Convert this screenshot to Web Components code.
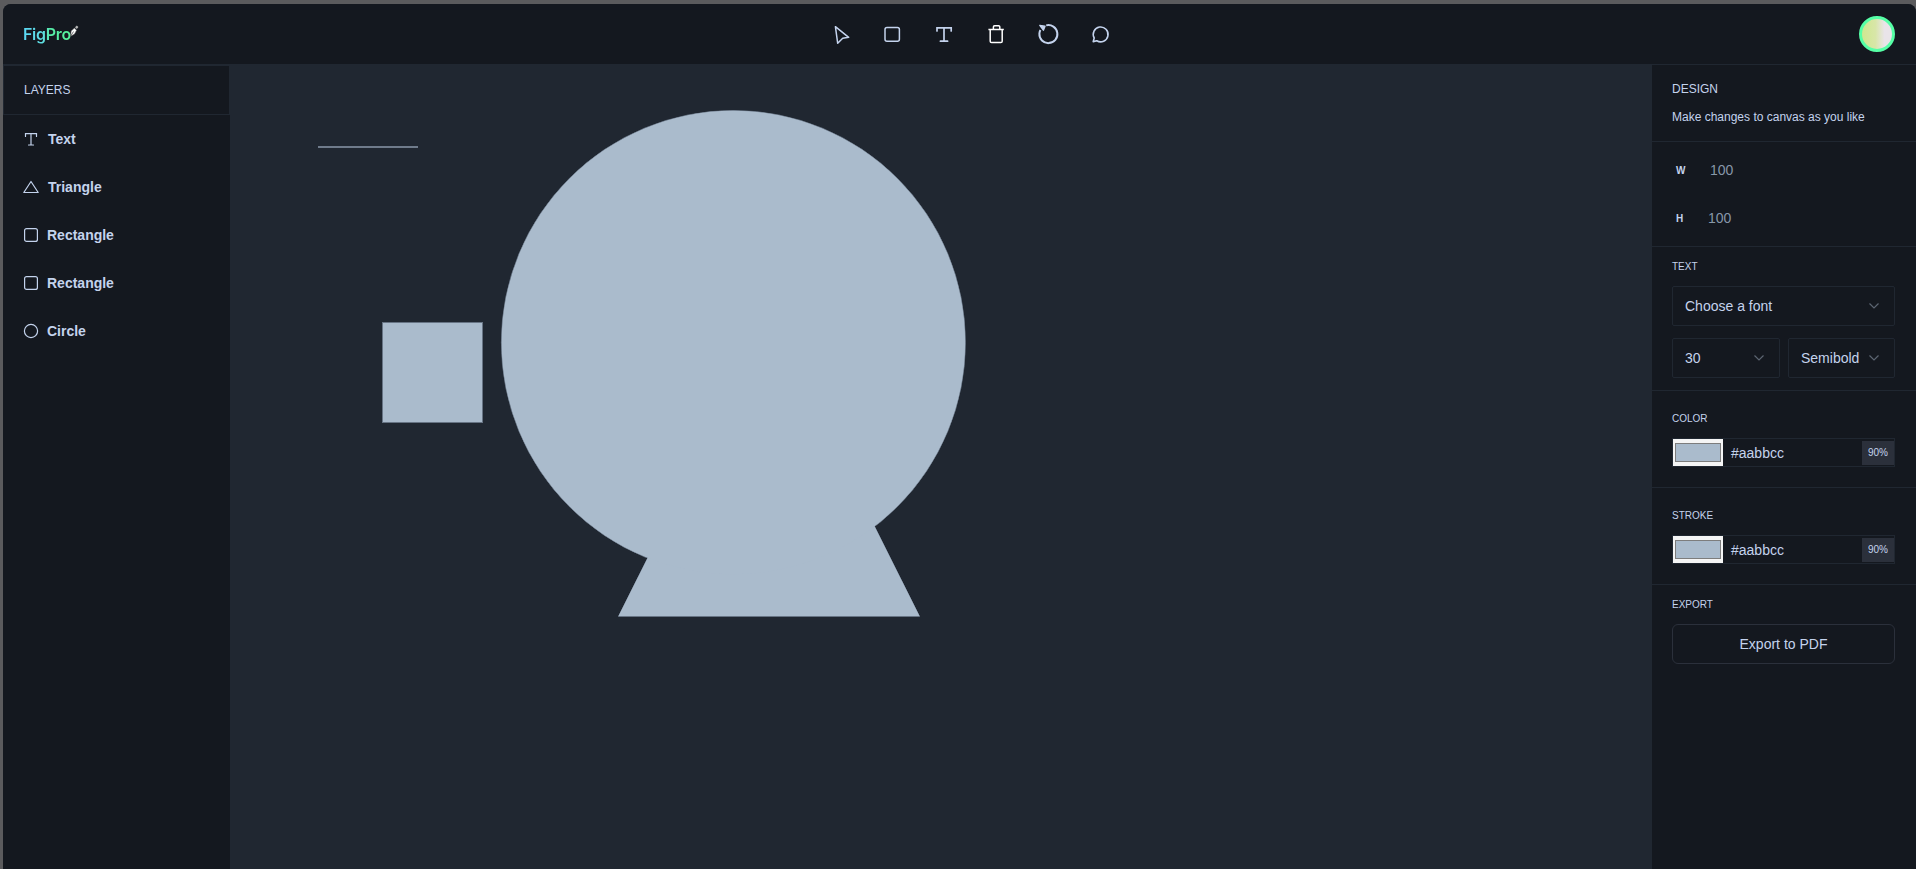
<!DOCTYPE html>
<html>
<head>
<meta charset="utf-8">
<title>FigPro</title>
<style>
html, body { margin: 0; height: 100%; background: #5b5b5d; overflow: hidden; }
body { padding: 4px 0 0 3px; box-sizing: border-box; font-family: "Liberation Sans", Arial, sans-serif; color: #c4d3ed; }
fig-app { height: 100%; }
</style>
</head>
<body>
<fig-app>
  <fig-navbar slot="nav"></fig-navbar>
  <layer-sidebar slot="left">
    <layer-item icon="text">Text</layer-item>
    <layer-item icon="triangle">Triangle</layer-item>
    <layer-item icon="rect">Rectangle</layer-item>
    <layer-item icon="rect">Rectangle</layer-item>
    <layer-item icon="circle">Circle</layer-item>
  </layer-sidebar>
  <fig-canvas slot="canvas"></fig-canvas>
  <design-panel slot="right"></design-panel>
</fig-app>

<script>
const icons = {
    select: '<path d="M7.4 4.7 20.7 15.3 14.7 16.3 9.7 21.3Z" stroke-linejoin="round"/>',
    rect: '<rect x="5" y="5.4" width="14.4" height="13.8" rx="2"/>',
    text: '<path d="M5 9V5.8H19.2V9M12 5.8V19.2M8.4 19.2H15.6" stroke-linecap="round" stroke-width="1.7"/>',
    trash: '<path d="M4.4 7.6H19.8M6.2 7.6V19.2a1.4 1.4 0 0 0 1.4 1.4H16.8a1.4 1.4 0 0 0 1.4-1.4V7.6M9.4 7.4V5a1.2 1.2 0 0 1 1.2-1.2H14.6a1.2 1.2 0 0 1 1.2 1.2V7.4" stroke="#fff"/>',
    reload: '<path d="M10.2 3.4a9 9 0 1 1-6.8 8.2 9 9 0 0 1 1-3.6" stroke-width="2"/><path d="M3.8 3.4 9 4.2 7.4 8.2Z" fill="#c4d3ed" stroke-width="1.4" stroke-linejoin="round"/>',
    comment: '<path d="M5.2 19.6 6.2 16a7.4 7.4 0 1 1 2.6 2.7Z" stroke-linejoin="round" stroke-width="1.6"/>'
};

const layerIcons = {
    text: '<path d="M2.5 5.5V2.7H13.5V5.5M8 2.7V14M5.5 14H10.5" stroke-linecap="round"/>',
    triangle: '<path d="M8 2.5 15.2 13.5H.8Z" stroke-linejoin="round"/>',
    rect: '<rect x="1.6" y="1.6" width="12.8" height="12.8" rx="2"/>',
    circle: '<circle cx="8" cy="8" r="6.6"/>'
};

class FigApp extends HTMLElement {
    constructor () {
        super();
        this.attachShadow({ mode: 'open' });
        this.shadowRoot.innerHTML = `
<style>
:host { display: flex; flex-direction: column; border-radius: 8px 8px 0 0; overflow: hidden; background: #202731; }
main { flex: 1; min-height: 0; display: flex; }
::slotted(fig-canvas) { flex: 1; min-width: 0; }
</style>
<slot name="nav"></slot>
<main>
  <slot name="left"></slot>
  <slot name="canvas"></slot>
  <slot name="right"></slot>
</main>`;
    }
}

class ToolButton extends HTMLElement {
    constructor () {
        super();
        this.attachShadow({ mode: 'open' });
        this.shadowRoot.innerHTML = `
<style>
:host { display: block; width: 24px; height: 24px; }
svg { display: block; fill: none; stroke: #c4d3ed; stroke-width: 1.5; }
</style>
<svg width="24" height="24" viewBox="0 0 24 24">${icons[this.getAttribute('icon')]}</svg>`;
    }
}

class FigNavbar extends HTMLElement {
    constructor () {
        super();
        this.attachShadow({ mode: 'open' });
        this.shadowRoot.innerHTML = `
<style>
:host { display: flex; align-items: center; justify-content: space-between; height: 60px; padding: 0 21px 0 20px; background: #14181f; border-bottom: 1px solid #202731; }
.logo { display: flex; align-items: flex-start; width: 58px; }
.word { font: 600 16px/20px Inter, sans-serif; letter-spacing: -.3px; background: linear-gradient(90deg, #5ad8f5 0%, #5fdde0 42%, #56eba8 56%, #56f59a 100%); -webkit-background-clip: text; background-clip: text; color: transparent; }
.nib { margin: 0 0 0 -2px; flex: none; }
.tools { display: flex; gap: 28px; align-items: center; }
.avatar { width: 36px; height: 36px; box-sizing: border-box; border-radius: 50%; border: 3px solid #56ffa6; background: linear-gradient(90deg, #cfe88f 0%, #d8e6a8 45%, #e9e4e9 75%); }
</style>
<div class="logo">
  <span class="word">FigPro</span>
  <svg class="nib" width="10" height="14" viewBox="0 0 10 13">
    <path d="M6 2.8 7.8 1 9.4 2.6 7.8 4.6Z" fill="#b5b5b5"/>
    <path d="M1.5 11.8 2.2 6.5 5.5 3.5 7.5 5.8 5.5 9.5Z" fill="#fff" stroke="#666" stroke-width=".5"/>
    <path d="M1.5 11.8 4.5 7" stroke="#333" stroke-width=".7"/>
  </svg>
</div>
<div class="tools">
  <tool-button icon="select"></tool-button>
  <tool-button icon="rect"></tool-button>
  <tool-button icon="text"></tool-button>
  <tool-button icon="trash"></tool-button>
  <tool-button icon="reload"></tool-button>
  <tool-button icon="comment"></tool-button>
</div>
<div class="avatar"></div>`;
    }
}

class LayerSidebar extends HTMLElement {
    constructor () {
        super();
        this.attachShadow({ mode: 'open' });
        this.shadowRoot.innerHTML = `
<style>
:host { display: flex; flex-direction: column; flex: none; width: 227px; background: #14181f; }
h3 { margin: 0; height: 48px; padding-left: 20px; border: 1px solid #202731; font: 400 12px/48px "Liberation Sans", sans-serif; color: #c4d3ed; }
</style>
<h3>LAYERS</h3>
<slot></slot>`;
    }
}

class LayerItem extends HTMLElement {
    constructor () {
        super();
        this.attachShadow({ mode: 'open' });
        const icon = this.getAttribute('icon');
        const gap = icon === 'text' || icon === 'triangle' ? 9 : 8;
        this.shadowRoot.innerHTML = `
<style>
:host { display: flex; align-items: center; gap: ${gap}px; height: 48px; padding-left: 20px; font: 700 14px "Liberation Sans", sans-serif; color: #c4d3ed; }
svg { fill: none; stroke: #c4d3ed; stroke-width: 1.2; flex: none; }
</style>
<svg width="16" height="16" viewBox="0 0 16 16">${layerIcons[icon]}</svg>
<slot></slot>`;
    }
}

class FigCanvas extends HTMLElement {
    constructor () {
        super();
        this.attachShadow({ mode: 'open' });
        this.shadowRoot.innerHTML = `
<style>
:host { display: block; background: #202731; overflow: hidden; }
svg { display: block; }
</style>
<svg width="1422" height="804" viewBox="230 65 1422 804">
  <rect x="318" y="146" width="100" height="2" fill="#6f7b8b"/>
  <rect x="382.5" y="322.5" width="100" height="100" fill="#aabbcc" stroke="#677484"/>
  <path d="M769 315.5 919.5 616.5H618.5Z" fill="#aabbcc" stroke="#677484"/>
  <circle cx="733.4" cy="342.5" r="232" fill="#aabbcc" stroke="#677484"/>
  <path d="M769 315.5 919.5 616H618.5Z" fill="#aabbcc"/>
  <circle cx="733.4" cy="342.5" r="231.7" fill="#aabbcc"/>
</svg>`;
    }
}

class PanelSection extends HTMLElement {
    constructor () {
        super();
        this.attachShadow({ mode: 'open' });
        const label = this.getAttribute('label');
        this.shadowRoot.innerHTML = `
<style>
:host { display: block; padding: var(--pad, 20px) 21px var(--pad, 20px) 20px; border-bottom: 1px solid #202731; }
:host(:last-child) { border-bottom: none; }
.label { font: 400 10px/14px "Liberation Sans", sans-serif; color: #c4d3ed; padding-top: 1px; margin-bottom: 12px; }
</style>
${label ? `<div class="label">${label}</div>` : ''}
<slot></slot>`;
    }
}

class SelectBox extends HTMLElement {
    constructor () {
        super();
        this.attachShadow({ mode: 'open' });
        this.shadowRoot.innerHTML = `
<style>
:host { display: flex; align-items: center; justify-content: space-between; box-sizing: border-box; height: 40px; padding: 0 15px 0 12px; border: 1px solid #202731; border-radius: 2px; font: 400 14px "Liberation Sans", sans-serif; color: #c4d3ed; }
svg { fill: none; stroke: #5c6572; stroke-width: 1.2; flex: none; }
</style>
<slot></slot>
<svg width="10" height="6" viewBox="0 0 10 6"><path d="M.5 .5 5 5 9.5 .5"/></svg>`;
    }
}

class DimField extends HTMLElement {
    constructor () {
        super();
        this.attachShadow({ mode: 'open' });
        this.shadowRoot.innerHTML = `
<style>
:host { display: flex; align-items: center; height: 48px; padding-left: 4px; }
b { font: 700 10px "Liberation Sans", sans-serif; color: #c4d3ed; flex: none; width: var(--w, 30px); }
span { font: 400 14px "Liberation Sans", sans-serif; color: #8797a9; }
</style>
<b>${this.getAttribute('label')}</b><span>100</span>`;
    }
}

class ColorField extends HTMLElement {
    constructor () {
        super();
        this.attachShadow({ mode: 'open' });
        this.shadowRoot.innerHTML = `
<style>
:host { display: flex; align-items: center; box-sizing: border-box; height: 29px; border: 1px solid #202731; font: 400 14px "Liberation Sans", sans-serif; color: #c4d3ed; }
.swatch { box-sizing: border-box; width: 50px; height: 27px; flex: none; padding: 4px 2px 4px 2px; background: #f5f5f5; }
.swatch i { display: block; height: 100%; box-sizing: border-box; background: #aabbcc; border: 1px solid #7d7d7d; }
.hex { flex: 1; padding-left: 8px; }
.pct { box-sizing: border-box; width: 32px; height: 24px; background: #2b303b; font-size: 10px; line-height: 24px; text-align: center; flex: none; }
</style>
<div class="swatch"><i></i></div>
<div class="hex">#aabbcc</div>
<div class="pct">90%</div>`;
    }
}

class DesignPanel extends HTMLElement {
    constructor () {
        super();
        this.attachShadow({ mode: 'open' });
        this.shadowRoot.innerHTML = `
<style>
:host { display: flex; flex-direction: column; flex: none; width: 264px; background: #14181f; }
h3 { margin: 0 0 12px; padding-top: 1px; font: 400 12px/16px "Liberation Sans", sans-serif; color: #c4d3ed; }
p { margin: 0; font: 400 12px/16px "Liberation Sans", sans-serif; color: #c4d3ed; }
.head { --pad: 15px; }
.head p { padding-bottom: 1px; }
.dims { --pad: 4px; }
.text { --pad: 12px; }
.row { display: grid; grid-template-columns: 108px 107px; gap: 8px; margin-top: 12px; }
.export { --pad: 12px; }
.export-btn { box-sizing: border-box; height: 40px; border: 1px solid #2b303b; border-radius: 6px; font: 400 14px/38px "Liberation Sans", sans-serif; color: #c4d3ed; text-align: center; }
</style>
<panel-section class="head"><h3>DESIGN</h3><p>Make changes to canvas as you like</p></panel-section>
<panel-section class="dims">
  <dim-field label="W" style="--w: 34px"></dim-field>
  <dim-field label="H" style="--w: 32px"></dim-field>
</panel-section>
<panel-section class="text" label="TEXT">
  <select-box>Choose a font</select-box>
  <div class="row"><select-box>30</select-box><select-box>Semibold</select-box></div>
</panel-section>
<panel-section label="COLOR"><color-field></color-field></panel-section>
<panel-section label="STROKE"><color-field></color-field></panel-section>
<panel-section class="export" label="EXPORT"><div class="export-btn">Export to PDF</div></panel-section>`;
    }
}

customElements.define('tool-button', ToolButton);
customElements.define('fig-navbar', FigNavbar);
customElements.define('layer-item', LayerItem);
customElements.define('layer-sidebar', LayerSidebar);
customElements.define('fig-canvas', FigCanvas);
customElements.define('panel-section', PanelSection);
customElements.define('select-box', SelectBox);
customElements.define('dim-field', DimField);
customElements.define('color-field', ColorField);
customElements.define('design-panel', DesignPanel);
customElements.define('fig-app', FigApp);
</script>
</body>
</html>
